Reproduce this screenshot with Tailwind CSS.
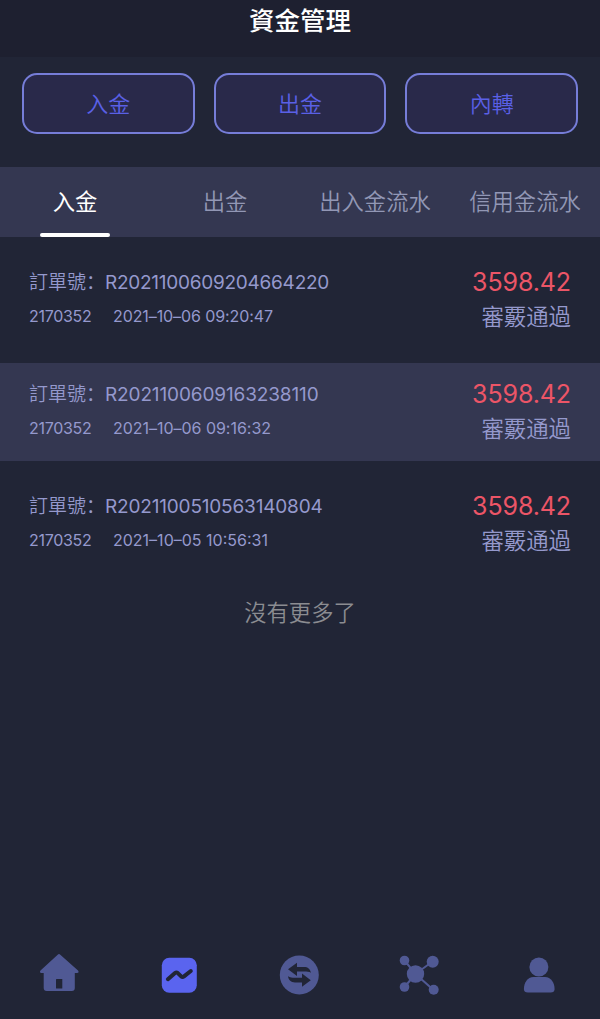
<!DOCTYPE html>
<html lang="zh-Hans">
<head>
<meta charset="utf-8">
<meta name="viewport" content="width=device-width, initial-scale=1">
<title>資金管理</title>
<script src="https://cdn.jsdelivr.net/npm/@tailwindcss/browser@4"></script>
</head>
<body class="bg-[#212536]">
<div class="flex h-[1019px] w-[600px] flex-col overflow-hidden bg-[#212536] font-['Inter','Noto_Sans_CJK_SC',sans-serif] font-[350] text-[#9599cd]">
  <header class="flex h-[57px] shrink-0 justify-center bg-[#1e2030]">
    <h1 class="h-10 text-[25.5px] leading-[41px] font-medium text-white">資金管理</h1>
  </header>
  <div class="flex h-[110px] shrink-0 gap-[19px] px-[22px] pt-4 text-[22px] text-[#5a60e6]">
    <button class="h-[61px] flex-1 rounded-[15px] border-2 border-[#767dd8] bg-[#29294a] pt-px">入金</button>
    <button class="h-[61px] flex-1 rounded-[15px] border-2 border-[#767dd8] bg-[#29294a] pt-px">出金</button>
    <button class="h-[61px] flex-1 rounded-[15px] border-2 border-[#767dd8] bg-[#29294a] pt-px">內轉</button>
  </div>
  <nav class="grid h-[70px] shrink-0 grid-cols-4 bg-[#343751] text-center text-[22.3px] leading-[70px] whitespace-nowrap text-[#9297b5]">
    <div class="flex flex-col items-center font-normal text-white"><span class="h-[66px]">入金</span><span class="h-1 w-[70px] rounded-[2px] bg-white"></span></div>
    <div>出金</div>
    <div>出入金流水</div>
    <div>信用金流水</div>
  </nav>
  <main class="flex flex-col gap-[14px] pt-[14px]">
    <section class="flex h-[98px] justify-between px-[29px] pt-4">
      <div>
        <div class="flex h-[34px] text-[19px] leading-[32px]"><span class="w-[76px]">訂單號：</span><span class="font-normal tracking-[-0.26px]">R2021100609204664220</span></div>
        <div class="flex text-[16px] leading-[30px] font-normal"><span class="w-[84px] tracking-[-0.3px]">2170352</span><span class="tracking-[-0.09px]">2021–10–06 09:20:47</span></div>
      </div>
      <div class="text-right">
        <div class="h-[35px] text-[25px] leading-[30px] font-normal tracking-[-0.1px] text-[#ec5567]">3598.42</div>
        <div class="text-[22.4px] leading-[30px]">審覈通過</div>
      </div>
    </section>
    <section class="flex h-[98px] justify-between bg-[#343751] px-[29px] pt-4">
      <div>
        <div class="flex h-[34px] text-[19px] leading-[32px]"><span class="w-[76px]">訂單號：</span><span class="font-normal tracking-[-0.13px]">R2021100609163238110</span></div>
        <div class="flex text-[16px] leading-[30px] font-normal"><span class="w-[84px] tracking-[-0.3px]">2170352</span><span class="tracking-[-0.03px]">2021–10–06 09:16:32</span></div>
      </div>
      <div class="text-right">
        <div class="h-[35px] text-[25px] leading-[30px] font-normal tracking-[-0.1px] text-[#ec5567]">3598.42</div>
        <div class="text-[22.4px] leading-[30px]">審覈通過</div>
      </div>
    </section>
    <section class="flex h-[98px] justify-between px-[29px] pt-4">
      <div>
        <div class="flex h-[34px] text-[19px] leading-[32px]"><span class="w-[76px]">訂單號：</span><span class="font-normal tracking-[-0.18px]">R2021100510563140804</span></div>
        <div class="flex text-[16px] leading-[30px] font-normal"><span class="w-[84px] tracking-[-0.3px]">2170352</span><span>2021–10–05 10:56:31</span></div>
      </div>
      <div class="text-right">
        <div class="h-[35px] text-[25px] leading-[30px] font-normal tracking-[-0.1px] text-[#ec5567]">3598.42</div>
        <div class="text-[22.4px] leading-[30px]">審覈通過</div>
      </div>
    </section>
    <p class="h-[52px] text-center text-[22.3px] leading-[52px] text-[#8b8c91]">沒有更多了</p>
  </main>
  <footer class="mt-auto grid h-[79px] shrink-0 grid-cols-5 text-[#505994]">
    <svg class="h-[79px] w-[120px]" viewBox="0 0 120 79" fill="currentColor"><path d="M57.700 14.700Q59 13.500 60.300 14.700L78 30.500Q79.600 32.700 77 33H74.800V48Q74.800 51 71.800 51H46.700Q43.700 51 43.700 48V33H41.500Q39 32.700 40.500 30.500Z"/><rect x="56" y="39" width="6.300" height="9.500" rx=".5" fill="#212536"/></svg>
    <svg class="h-[79px] w-[120px]" viewBox="0 0 120 79"><rect x="41.800" y="17.800" width="35" height="35" rx="7.500" fill="#5a64ef"/><path d="M47.900 39.200L55 33Q56.400 31.900 57.800 33.100L61.200 36.400Q62.500 37.500 64 36.400L70.800 31" fill="none" stroke="#212536" stroke-width="4" stroke-linecap="round" stroke-linejoin="round"/></svg>
    <svg class="h-[79px] w-[120px]" viewBox="0 0 120 79"><circle cx="59.300" cy="35" r="19.500" fill="currentColor"/><path d="M48 29.200L57 22.700V27H64C68 27 70 29 71 32.800C69 31.800 67 31.600 64 31.600H57V36ZM70.800 40.200L62 46.700V42.400H55C51 42.400 48.700 40.200 48 36.200C50 37.200 52 37.700 55 37.700H62V33.400Z" fill="#212536"/></svg>
    <svg class="h-[79px] w-[120px]" viewBox="0 0 120 79" fill="currentColor"><path d="M44.500 20.500L55.500 34L72.500 21.500M44.500 47L55.500 34L73.500 50" fill="none" stroke="currentColor" stroke-width="2"/><circle cx="55.500" cy="34" r="8.700"/><circle cx="44.500" cy="20.500" r="4.800"/><circle cx="72.700" cy="21.700" r="6"/><circle cx="44.500" cy="47" r="4.800"/><circle cx="73.700" cy="49.800" r="5"/></svg>
    <svg class="h-[79px] w-[120px]" viewBox="0 0 120 79" fill="currentColor"><circle cx="58.900" cy="27" r="9.500"/><path d="M53.500 37H65C71 37 74.600 43 74.600 49Q74.600 52.600 70.500 52.600H48Q43.900 52.600 43.900 49C43.900 43 47.500 37 53.500 37Z"/></svg>
  </footer>
</div>
</body>
</html>
